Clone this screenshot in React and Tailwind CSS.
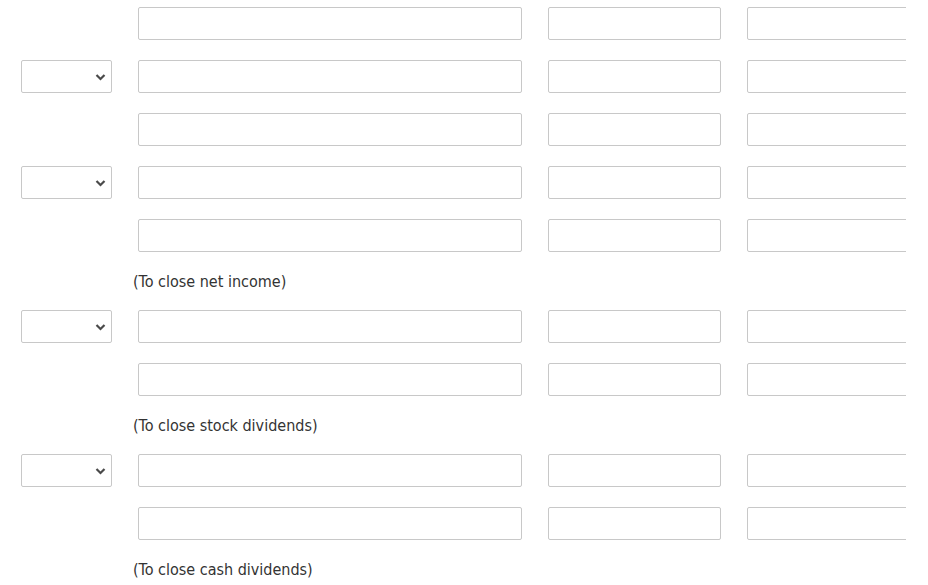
import React from "react";

function Select() {
  return (
    <div className="relative w-[91px] h-[33px] shrink-0 border border-[#c8c8c8] rounded-[2px] bg-white">
      <svg
        className="absolute right-[5px] top-[12px]"
        width="11"
        height="8"
        viewBox="0 0 11 8"
      >
        <path d="M1.5 2 L5.5 6 L9.5 2" fill="none" stroke="#4a4a4a" strokeWidth="2.2" />
      </svg>
    </div>
  );
}

function Row({ select }) {
  return (
    <div className="flex gap-[26px] h-[33px]">
      {select ? <Select /> : <div className="w-[91px] shrink-0" />}
      <div className="w-[384px] h-[33px] shrink-0 border border-[#c8c8c8] rounded-[2px] bg-white" />
      <div className="w-[173px] h-[33px] shrink-0 border border-[#c8c8c8] rounded-[2px] bg-white" />
      <div className="w-[173px] h-[33px] shrink-0 border border-[#c8c8c8] rounded-[2px] bg-white" />
    </div>
  );
}

function Label({ children }) {
  return (
    <div className="ml-[112px] h-[18px] pt-[1px] leading-[18px] text-[16px] text-[#333]" style={{ fontFamily: '"DejaVu Sans Condensed", "DejaVu Sans", sans-serif' }}>
      {children}
    </div>
  );
}

export default function App() {
  return (
    <div className="w-[928px] h-[585px] bg-white overflow-hidden">
      <div className="w-[906px] overflow-hidden pl-[21px] pt-[7px] flex flex-col gap-[20px]">
        <Row />
        <Row select />
        <Row />
        <Row select />
        <Row />
        <Label>(To close net income)</Label>
        <Row select />
        <Row />
        <Label>(To close stock dividends)</Label>
        <Row select />
        <Row />
        <Label>(To close cash dividends)</Label>
      </div>
    </div>
  );
}
